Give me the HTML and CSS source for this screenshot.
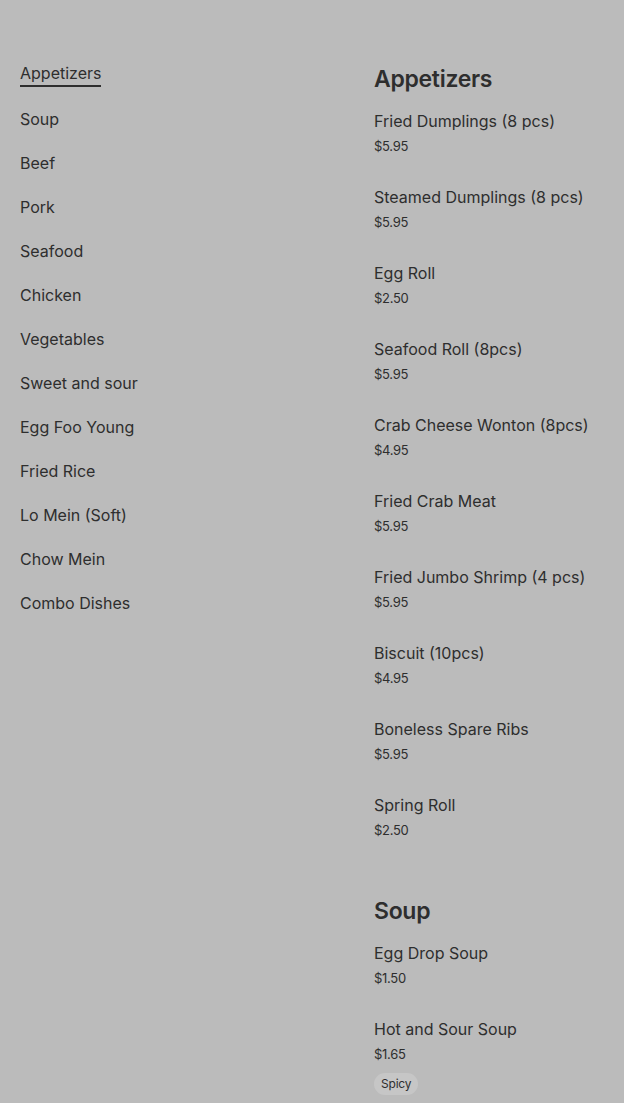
FILE: index.html
```html
<!DOCTYPE html>
<html lang="en">
<head>
    <meta charset="UTF-8">
    <meta name="viewport" content="width=device-width, initial-scale=1.0">
    <title>Menu</title>
    <link rel="stylesheet" href="styles.css">
</head>
<body>
    <div class="menu">
        <nav class="menu__nav">
            <a href="#" class="nav__link nav__link_active">Appetizers</a>
            <a href="#" class="nav__link">Soup</a>
            <a href="#" class="nav__link">Beef</a>
            <a href="#" class="nav__link">Pork</a>
            <a href="#" class="nav__link">Seafood</a>
            <a href="#" class="nav__link">Chicken</a>
            <a href="#" class="nav__link">Vegetables</a>
            <a href="#" class="nav__link">Sweet and sour</a>
            <a href="#" class="nav__link">Egg Foo Young</a>
            <a href="#" class="nav__link">Fried Rice</a>
            <a href="#" class="nav__link">Lo Mein (Soft)</a>
            <a href="#" class="nav__link">Chow Mein</a>
            <a href="#" class="nav__link">Combo Dishes</a>
        </nav>

        <div class="menu__list">
            <section class="category">
                <h2 class="category__title">Appetizers</h2>
                <div class="item">
                    <div class="item__name">Fried Dumplings (8 pcs)</div>
                    <div class="item__price">$5.95</div>
                </div>
                <div class="item">
                    <div class="item__name">Steamed Dumplings (8 pcs)</div>
                    <div class="item__price">$5.95</div>
                </div>
                <div class="item">
                    <div class="item__name">Egg Roll</div>
                    <div class="item__price">$2.50</div>
                </div>
                <div class="item">
                    <div class="item__name">Seafood Roll (8pcs)</div>
                    <div class="item__price">$5.95</div>
                </div>
                <div class="item">
                    <div class="item__name">Crab Cheese Wonton (8pcs)</div>
                    <div class="item__price">$4.95</div>
                </div>
                <div class="item">
                    <div class="item__name">Fried Crab Meat</div>
                    <div class="item__price">$5.95</div>
                </div>
                <div class="item">
                    <div class="item__name">Fried Jumbo Shrimp (4 pcs)</div>
                    <div class="item__price">$5.95</div>
                </div>
                <div class="item">
                    <div class="item__name">Biscuit (10pcs)</div>
                    <div class="item__price">$4.95</div>
                </div>
                <div class="item">
                    <div class="item__name">Boneless Spare Ribs</div>
                    <div class="item__price">$5.95</div>
                </div>
                <div class="item">
                    <div class="item__name">Spring Roll</div>
                    <div class="item__price">$2.50</div>
                </div>
            </section>

            <section class="category">
                <h2 class="category__title">Soup</h2>
                <div class="item">
                    <div class="item__name">Egg Drop Soup</div>
                    <div class="item__price">$1.50</div>
                </div>
                <div class="item">
                    <div class="item__name">Hot and Sour Soup</div>
                    <div class="item__price">$1.65</div>
                    <span class="tag">Spicy</span>
                </div>
            </section>
        </div>
    </div>
</body>
</html>
```

FILE: styles.css
```css
body {
    margin: 0;
    background-color: #bbbbbb;
    color: #2e2e2e;
    font-family: Inter, "Noto Sans", sans-serif;
    overflow: hidden;
}
.menu {
    display: grid;
    grid-template-columns: 354px 1fr;
    padding: 61px 20px 0;
}
.menu__nav {
    display: flex;
    flex-direction: column;
    align-items: flex-start;
    gap: 20px;
    padding-top: 1px;
}
.nav__link {
    font-size: 16px;
    line-height: 24px;
    color: #2e2e2e;
    text-decoration: none;
}
.nav__link_active {
    line-height: 23px;
    border-bottom: 2px solid #2e2e2e;
}
.menu__list {
    padding-top: 2px;
}
.category {
    margin-bottom: 26px;
}
.category__title {
    margin: 0 0 14px;
    font-size: 23px;
    line-height: 32px;
    font-weight: 600;
    letter-spacing: -0.3px;
}
.item {
    padding-bottom: 29px;
}
.item__name {
    font-size: 16px;
    line-height: 24px;
}
.item__price {
    margin-top: 3px;
    font-size: 13px;
    line-height: 20px;
    letter-spacing: -0.3px;
}
.tag {
    display: inline-block;
    margin-top: 9px;
    padding: 0 7px;
    height: 22px;
    line-height: 22px;
    border-radius: 11px;
    background-color: #c6c6c6;
    font-size: 12px;
    letter-spacing: -0.2px;
}
```
